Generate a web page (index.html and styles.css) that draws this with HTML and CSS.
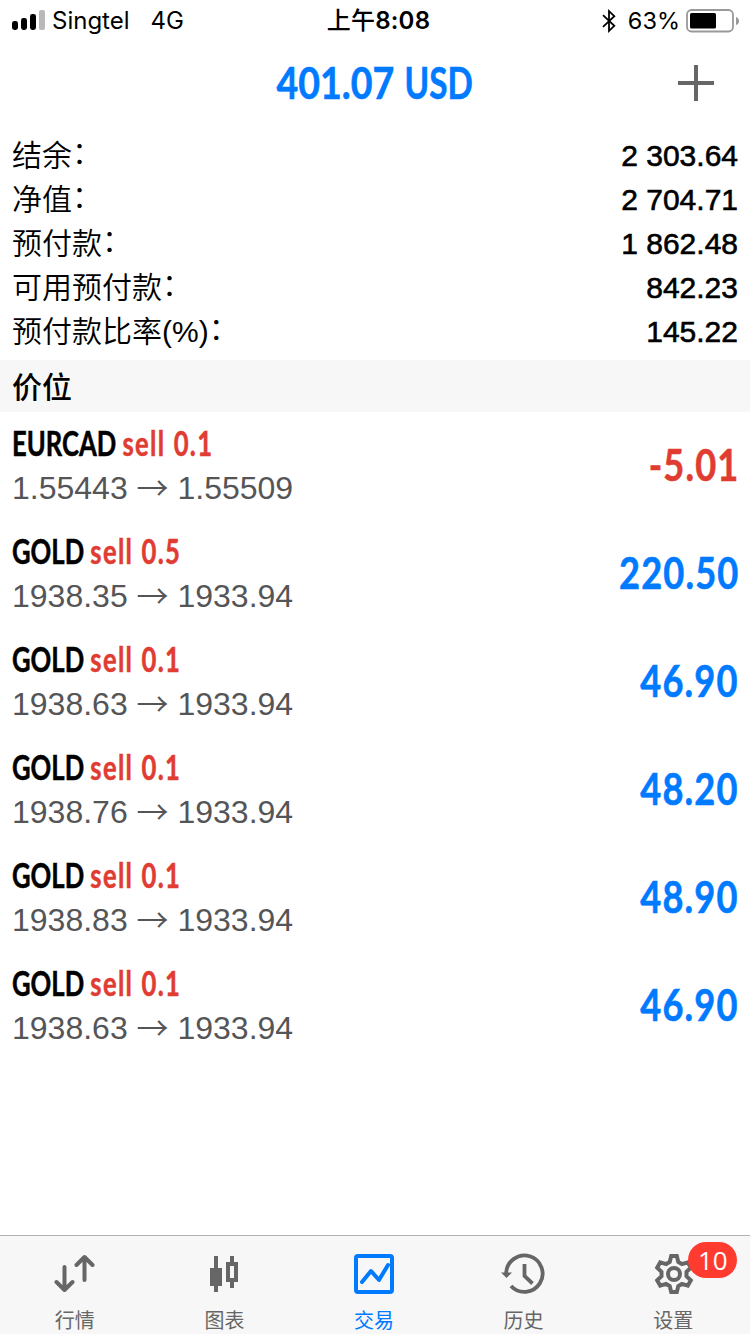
FILE: index.html
```html
<!DOCTYPE html>
<html lang="zh-CN">
<head>
<meta charset="utf-8">
<title>401.07 USD</title>
<link rel="stylesheet" href="styles.css">
</head>
<body>
<div class="screen">
  <header class="status">
    <div class="status-left">
      <svg class="signal" width="34" height="20" viewBox="0 0 34 20"><rect x="0" y="11" width="6" height="9" rx="2.4"/><rect x="9" y="8" width="6" height="12" rx="2.4"/><rect x="18" y="4" width="6" height="16" rx="2.4"/><rect x="27" y="0" width="6" height="20" rx="2" fill="#b9b9b9"/></svg>
      <span class="carrier">Singtel</span>
      <span class="network">4G</span>
    </div>
    <div class="clock"><span class="clock-half">上午</span>8:08</div>
    <div class="status-right">
      <svg width="14" height="24" viewBox="0 0 14 24" fill="none" stroke="#000" stroke-width="1.8"><path d="M1 6.2 12.3 16.8 7 21.8V2.2L12.3 7.2 1 17.8"/></svg>
      <span class="percent">63%</span>
      <svg class="battery" width="53" height="24" viewBox="0 0 53 24"><rect x="1" y="1" width="46" height="21.5" rx="4.5" fill="none" stroke="#999" stroke-width="1.8"/><rect x="4" y="4" width="26" height="15.5" rx="1.5"/><path d="M50 8q3 1 3 4t-3 4z" fill="#999"/></svg>
    </div>
  </header>

  <div class="title-bar">
    <h1 class="total"><span class="amount">401.07</span> <span class="currency">USD</span></h1>
    <svg class="add" width="36" height="36" viewBox="0 0 36 36"><path d="M18 0v36M0 18h36" stroke="#666" stroke-width="4"/></svg>
  </div>

  <dl class="summary">
    <div class="line"><dt>结余<span class="colon">：</span></dt><dd>2 303.64</dd></div>
    <div class="line"><dt>净值<span class="colon">：</span></dt><dd>2 704.71</dd></div>
    <div class="line"><dt>预付款<span class="colon">：</span></dt><dd>1 862.48</dd></div>
    <div class="line"><dt>可用预付款<span class="colon">：</span></dt><dd>842.23</dd></div>
    <div class="line"><dt>预付款比率<span class="latin">(%)</span><span class="colon">：</span></dt><dd>145.22</dd></div>
  </dl>

  <h2 class="section">价位</h2>

  <main class="positions">
    <div class="position"><div><div class="name">EURCAD <span class="side">sell 0.1</span></div><div class="prices">1.55443 <span class="arrow">→</span> 1.55509</div></div><div class="profit loss">-5.01</div></div>
    <div class="position"><div><div class="name">GOLD <span class="side">sell 0.5</span></div><div class="prices">1938.35 <span class="arrow">→</span> 1933.94</div></div><div class="profit">220.50</div></div>
    <div class="position"><div><div class="name">GOLD <span class="side">sell 0.1</span></div><div class="prices">1938.63 <span class="arrow">→</span> 1933.94</div></div><div class="profit">46.90</div></div>
    <div class="position"><div><div class="name">GOLD <span class="side">sell 0.1</span></div><div class="prices">1938.76 <span class="arrow">→</span> 1933.94</div></div><div class="profit">48.20</div></div>
    <div class="position"><div><div class="name">GOLD <span class="side">sell 0.1</span></div><div class="prices">1938.83 <span class="arrow">→</span> 1933.94</div></div><div class="profit">48.90</div></div>
    <div class="position"><div><div class="name">GOLD <span class="side">sell 0.1</span></div><div class="prices">1938.63 <span class="arrow">→</span> 1933.94</div></div><div class="profit">46.90</div></div>
  </main>

  <nav class="tabs">
    <div class="tab">
      <svg class="icon" width="44" height="44" viewBox="0 0 44 44" fill="none" stroke="#666" stroke-width="4" stroke-linecap="round" stroke-linejoin="round"><path d="M11.500 15v23M3.500 30l8 8 8-8M31.500 28V5M23.500 13l8-8 8 8"/></svg>
      <span>行情</span>
    </div>
    <div class="tab">
      <svg class="icon" width="44" height="44" viewBox="0 0 44 44" fill="#666"><path d="M12 4h4v12h4v18h-4v6h-4v-6H8V16h4zM28 4h4v6h4v20h-4v6h-4v-6h-4V10h4zM28 14v12h4V14z" fill-rule="evenodd"/></svg>
      <span>图表</span>
    </div>
    <div class="tab active">
      <svg class="icon" width="44" height="44" viewBox="0 0 44 44" fill="none" stroke="#007aff"><rect x="4" y="4" width="36" height="36" rx="2" stroke-width="4"/><path d="M10 30l9-11 8 9 9-15" stroke-width="4" stroke-linecap="round" stroke-linejoin="round"/></svg>
      <span>交易</span>
    </div>
    <div class="tab">
      <svg class="icon history" width="44" height="44" viewBox="0 0 44 44" fill="none" stroke="#666" stroke-width="3.8"><path d="M5.2 21A18.2 18.2 0 1 1 10 34"/><path d="M23.5 12v12l8 7.5"/><path d="M0 20.5h11L5.5 26z" fill="#666" stroke="none"/></svg>
      <span>历史</span>
    </div>
    <div class="tab">
      <svg class="icon gear" width="44" height="44" viewBox="0 0 44 44" fill="none" stroke="#666" stroke-width="4"><circle cx="22" cy="22" r="6"/><path d="M19.200 4h5.600l1.500 6 3.600 2.100 5.900-1.700 3 5.200-4.300 4.300v4.200l4.300 4.300-3 5.200-5.900-1.700-3.600 2.100-1.500 6h-5.600l-1.500-6-3.600-2.100L8.200 33.600l-3-5.200 4.300-4.300v-4.200L5.200 15.600l3-5.200 5.900 1.700 3.600-2.100z"/></svg>
      <span>设置</span>
      <b class="badge">10</b>
    </div>
  </nav>
</div>
</body>
</html>
```
FILE: styles.css
```css
* { box-sizing: border-box; margin: 0; padding: 0; }

body {
  background: #fff;
  color: #000;
  font-family: "Liberation Sans", "Noto Sans CJK SC", sans-serif;
}

.screen {
  width: 750px;
  height: 1334px;
  display: flex;
  flex-direction: column;
  overflow: hidden;
}

.status {
  height: 41px;
  display: grid;
  grid-template-columns: 1fr auto 1fr;
  align-items: center;
  padding: 0 11px 0 12px;
  font-family: Inter, "Noto Sans CJK SC", sans-serif;
  font-size: 24px;
  line-height: 42px;
}
.status-left, .status-right { display: flex; align-items: center; }
.signal { margin-bottom: 2px; }
.battery { margin-bottom: 1px; }
.status-right { justify-content: flex-end; }
.carrier { margin-left: 6px; }
.network { margin-left: 21px; }
.clock { font-weight: 600; white-space: nowrap; padding-left: 6px; letter-spacing: .2px; }
.clock-half { font-weight: 500; }
.percent { margin: 0 6px 0 12px; font-size: 23.5px; }

.title-bar {
  height: 83px;
  display: grid;
  grid-template-columns: 1fr auto 1fr;
  align-items: center;
  padding: 1px 36px 0;
}
.total {
  grid-column: 2;
  font: 700 44px/82px Lato, sans-serif;
  color: #007aff;
  -webkit-text-stroke: .6px currentColor;
  transform: translateY(-1px) scaleX(.82);
}
.amount, .currency { display: inline-block; }
.amount { transform: scaleX(1.04); transform-origin: left; }
.currency { transform: scaleX(.92); transform-origin: right; }
.add { justify-self: end; }

.summary { height: 236px; padding: 9px 12px 0; }
.line {
  height: 44px;
  display: flex;
  justify-content: space-between;
  font-size: 30px;
  line-height: 44px;
}
.line dt {
  margin-top: -2px;
  font-family: "Noto Sans CJK SC", sans-serif;
  font-weight: 350;
}
.colon { display: inline-block; transform: translateY(-3px); }
.latin { font-family: "Liberation Sans", sans-serif; }
.line dd { -webkit-text-stroke: .6px #000; padding-top: 1px; }

.section {
  height: 52px;
  padding-left: 12px;
  background: #f7f7f7;
  font: 500 30px/50px "Noto Sans CJK SC", sans-serif;
}

.positions { flex: 1; }
.position {
  height: 108px;
  display: flex;
  justify-content: space-between;
  padding: 8px 12px 0;
}
.name {
  font: 700 33.5px/46px Lato, sans-serif;
  white-space: nowrap;
  -webkit-text-stroke: .5px currentColor;
  transform: scaleX(.765);
  transform-origin: left;
}
.side { color: #e03c31; letter-spacing: 1.7px; word-spacing: 1px; }
.prices {
  font-size: 32px;
  line-height: 44px;
  color: #555557;
  white-space: pre;
}
.arrow {
  display: inline-block;
  font-family: "Noto Sans CJK SC", sans-serif;
  font-weight: 350;
  line-height: 1;
  transform: translateY(1px);
}
.profit {
  font: 700 44px/88px Lato, sans-serif;
  letter-spacing: 1.4px;
  color: #007aff;
  -webkit-text-stroke: .6px currentColor;
  transform: translateX(1px) scaleX(.822);
  transform-origin: right;
}
.loss { color: #e03c31; }

.tabs {
  height: 99px;
  display: flex;
  padding-right: 2px;
  border-top: 1px solid #b2b2b2;
  background: #f7f7f7;
}
.tab {
  flex: 1;
  position: relative;
  display: flex;
  flex-direction: column;
  align-items: center;
  padding-top: 16px;
  color: #666;
  font: 400 20px/28px "Noto Sans CJK SC", sans-serif;
}
.icon { margin-bottom: 10px; }
.history { margin-right: 2px; }
.gear { margin-left: 2px; }
.active { color: #007aff; }
.badge {
  position: absolute;
  top: 6px;
  left: 90px;
  width: 49px;
  height: 36px;
  border-radius: 18px;
  background: #ff3b30;
  color: #fff;
  font: 400 26px/37px "Open Sans", sans-serif;
  text-align: center;
}
```
